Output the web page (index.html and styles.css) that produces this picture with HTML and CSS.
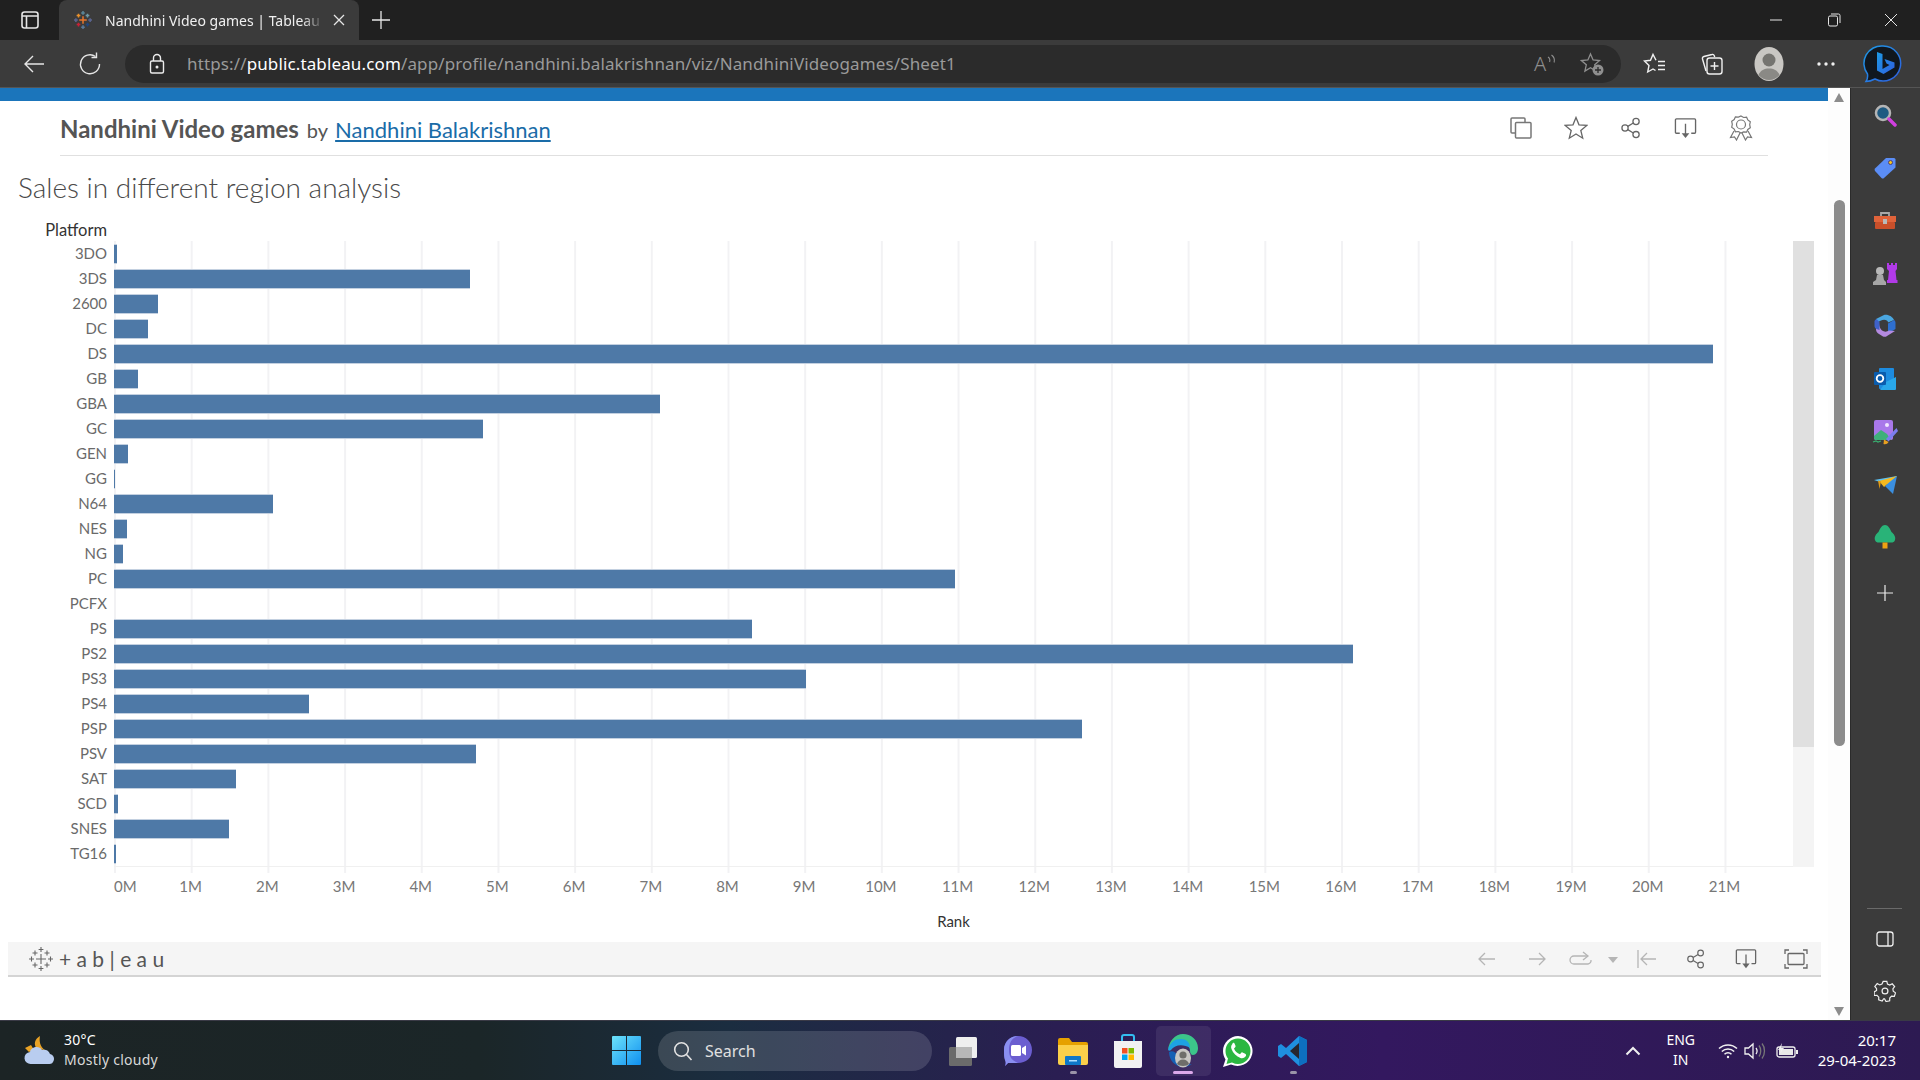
FILE: index.html
```html
<!DOCTYPE html>
<html lang="en">
<head>
    <meta charset="UTF-8">
    <title>Nandhini Video games | Tableau Public</title>
    <link rel="stylesheet" href="styles.css">
</head>
<body>
    <svg class="sprite" width="0" height="0">
        <symbol id="share" viewBox="0 0 24 24"><g fill="none" stroke="currentColor" stroke-width="1.4"><circle cx="5.5" cy="12" r="3.4"/><circle cx="17.5" cy="4.8" r="3.4"/><circle cx="17.5" cy="19.2" r="3.4"/><path d="M8.5 10.2l6-3.6M8.5 13.8l6 3.6"/></g></symbol>
        <symbol id="download" viewBox="0 0 24 24"><path d="M6 17H2.5a1 1 0 0 1-1-1V3a1 1 0 0 1 1-1h19a1 1 0 0 1 1 1v13a1 1 0 0 1-1 1H18M12 7v11" fill="none" stroke="currentColor" stroke-width="1.4"/><path d="M8 17h8l-4 5z" fill="currentColor"/></symbol>
        <symbol id="tabcross" viewBox="0 0 24 24"><g stroke="currentColor" stroke-width="1.1"><path d="M12 7v10M7 12h10"/><path d="M12 0v5M9.6 2.5h4.800M12 19v5M9.600 21.500h4.800M2.500 9.500v5M0 12h5M21.500 9.500v5M19 12h5M6 3.500v5M3.500 6h5M18 3.500v5M15.500 6h5M6 15.500v5M3.500 18h5M18 15.500v5M15.500 18h5"/></g></symbol>
    </svg>

    <div class="tabstrip">
        <div class="tab-toggle">
            <svg width="18" height="18" viewBox="0 0 18 18" fill="none" stroke="#e6e6e6" stroke-width="1.6"><rect x="1" y="1" width="16" height="16" rx="2.5"/><path d="M1 5h16M5.500 5v12"/></svg>
        </div>
        <div class="tab">
            <svg width="18" height="18" viewBox="0 0 24 24"><g stroke-width="2"><path d="M12 7v10M7 12h10" stroke="#e8762d"/><path d="M12 0v5M9.600 2.500h4.800" stroke="#5b879b"/><path d="M12 19v5M9.600 21.500h4.800" stroke="#59799b"/><path d="M2.500 9.500v5M0 12h5" stroke="#5b6591"/><path d="M21.500 9.500v5M19 12h5" stroke="#5b6591"/><path d="M6 3.500v5M3.500 6h5" stroke="#eb912b"/><path d="M18 3.500v5M15.500 6h5" stroke="#7099a6"/><path d="M6 15.500v5M3.500 18h5" stroke="#c72035"/><path d="M18 15.500v5M15.500 18h5" stroke="#1f447e"/></g></svg>
            <span class="tab-title">Nandhini Video games | Tableau</span>
            <svg class="tab-close" width="12" height="12" viewBox="0 0 12 12" stroke="#e6e6e6" stroke-width="1.300"><path d="M1 1l10 10M11 1L1 11"/></svg>
        </div>
        <div class="tab-new">
            <svg width="18" height="18" viewBox="0 0 18 18" stroke="#e6e6e6" stroke-width="1.300"><path d="M9 0v18M0 9h18"/></svg>
        </div>
        <div class="spacer"></div>
        <div class="win-btn"><svg width="14" height="14" viewBox="0 0 14 14" stroke="#e6e6e6"><path d="M1 7h12"/></svg></div>
        <div class="win-btn"><svg width="14" height="14" viewBox="0 0 14 14" fill="none" stroke="#e6e6e6"><rect x="1.500" y="3" width="9" height="10" rx="1.500"/><path d="M4 1h7.500a1.500 1.500 0 0 1 1.500 1.500V10"/></svg></div>
        <div class="win-btn"><svg width="14" height="14" viewBox="0 0 14 14" stroke="#e6e6e6"><path d="M1 1l12 12M13 1L1 13"/></svg></div>
    </div>

    <div class="toolbar">
        <div class="tool-btn">
            <svg width="24" height="24" viewBox="0 0 24 24" fill="none" stroke="#e6e6e6" stroke-width="1.400"><path d="M22 12H3M11 4l-8 8 8 8"/></svg>
        </div>
        <div class="tool-btn">
            <svg width="24" height="24" viewBox="0 0 24 24" fill="none" stroke="#e6e6e6" stroke-width="1.400"><path d="M17.500 4.500A9.500 9.500 0 1 0 21.500 12"/><path d="M18.500 0.500v5h-5"/></svg>
        </div>
        <div class="url-pill">
            <svg class="url-lock" width="24" height="24" viewBox="0 0 24 24" fill="none" stroke="#ececec" stroke-width="1.400"><rect x="5.500" y="9" width="13" height="12" rx="1.500"/><path d="M8.500 9V6a3.500 3.500 0 0 1 7 0v3"/><circle cx="12" cy="15" r="0.800" fill="#ececec"/></svg>
            <div class="url"><span class="url-dim">https://</span><span class="url-host">public.tableau.com</span><span class="url-dim">/app/profile/nandhini.balakrishnan/viz/NandhiniVideogames/Sheet1</span></div>
            <div class="read-aloud">
                <span class="read-a">A</span>
                <svg class="read-waves" width="10" height="12" viewBox="0 0 10 12" fill="none" stroke="#8f8f8f" stroke-width="1.100"><path d="M1 3c1.800 1.200 2.200 3 1.600 5M4.500 1c2.800 2 3.400 4.500 2.600 7.500"/></svg>
            </div>
            <svg class="url-icon" width="24" height="24" viewBox="0 0 24 24" fill="none" stroke="#8f8f8f" stroke-width="1.300"><path d="M10.500 2l2.600 6 6.400.6-4.800 4.200 1.400 6.300-5.600-3.300-5.600 3.300 1.400-6.300L1.500 8.600 7.900 8z"/><circle cx="18" cy="18" r="5.500" fill="#8f8f8f" stroke="none"/><path d="M18 15v6M15 18h6" stroke="#2b2b2b" stroke-width="1.300"/></svg>
        </div>
        <div class="end-btn">
            <svg width="24" height="24" viewBox="0 0 24 24" fill="none" stroke="#f0f0f0" stroke-width="1.400"><path d="M13 8.300L10 2.500 7.500 8.300 1.500 9 6 13.500 4.700 20 10 17l2.500 1.500"/><path d="M15 9.500h7M15 13.500h7M15 17.500h7"/></svg>
        </div>
        <div class="end-btn">
            <svg width="24" height="24" viewBox="0 0 24 24" fill="none" stroke="#f0f0f0" stroke-width="1.400"><path d="M6 19L2.500 7a2 2 0 0 1 1.400-2.500l8-2a2 2 0 0 1 2.400 1.200l.4 1.300"/><rect x="7" y="6" width="15" height="16" rx="2.500"/><path d="M14.500 10v8M10.500 14h8"/></svg>
        </div>
        <div class="end-btn">
            <svg width="30" height="34" viewBox="0 0 30 34"><ellipse cx="15" cy="17" rx="14.500" ry="17" fill="#c9c7c3"/><circle cx="15" cy="13" r="6.500" fill="#757470"/><path d="M4.500 28c2-5 6-6.500 10.500-6.500S23.500 23 25.500 28c-3 3.500-6.500 5-10.500 5s-7.500-1.500-10.500-5z" fill="#8a8985"/></svg>
        </div>
        <div class="end-btn">
            <svg width="18" height="4" viewBox="0 0 18 4" fill="#f0f0f0"><circle cx="2" cy="2" r="1.700"/><circle cx="9" cy="2" r="1.700"/><circle cx="16" cy="2" r="1.700"/></svg>
        </div>
        <div class="end-btn">
            <svg width="40" height="40" viewBox="0 0 40 40">
                <defs><linearGradient id="bingg" x1="0" y1="0" x2="1" y2="1"><stop offset="0" stop-color="#1d9be6"/><stop offset="1" stop-color="#2f5fe0"/></linearGradient></defs>
                <path d="M20 2a17.500 17.500 0 1 1-8 33c-3 1.500-6 2.500-9 2.500 1-1.500 2-4 1.500-7.500A17.500 17.500 0 0 1 20 2z" fill="#10171f" stroke="url(#bingg)" stroke-width="1.500"/>
                <path d="M14 8l5.500 2v15l7-4-3-1.500-2-4.500 10 3.500v5l-11 6.500-6.500-3.500z" fill="url(#bingg)"/>
            </svg>
        </div>
    </div>

    <div class="middle">
        <div class="page">
            <div class="topbar"></div>
            <div class="viz-header">
                <div class="viz-name"><strong>Nandhini Video games</strong><span class="viz-by">by</span><a class="viz-author" href="#">Nandhini Balakrishnan</a></div>
                <div class="viz-actions">
                    <div class="viz-action"><svg width="22" height="22" viewBox="0 0 22 22" fill="none" stroke="#777" stroke-width="1.500"><path d="M5 16H2a1 1 0 0 1-1-1V2a1 1 0 0 1 1-1h12a1 1 0 0 1 1 1v3"/><rect x="5.500" y="5.500" width="15.500" height="15.500" rx="1"/></svg></div>
                    <div class="viz-action"><svg width="24" height="24" viewBox="0 0 24 24" fill="none" stroke="#666" stroke-width="1.300"><path d="M12 1.500l3 7.300 7.800.6-6 5.100 1.900 7.700-6.700-4.200-6.700 4.200 1.900-7.700-6-5.100 7.800-.6z"/></svg></div>
                    <div class="viz-action"><svg class="ic-gray" width="22" height="22"><use href="#share"/></svg></div>
                    <div class="viz-action"><svg class="ic-gray" width="23" height="23"><use href="#download"/></svg></div>
                    <div class="viz-action"><svg width="24" height="26" viewBox="0 0 24 26" fill="none" stroke="#777" stroke-width="1.200"><path d="M12 1l2.600 1.500 3-.3 1.200 2.700 2.500 1.800-.6 3 .6 3-2.500 1.800-1.200 2.700-3-.3L12 18l-2.600-1.500-3 .3-1.200-2.700-2.500-1.800.6-3-.6-3 2.500-1.800 1.200-2.700 3 .3z"/><circle cx="12" cy="9.500" r="4.500"/><path d="M5 16l-3.500 6.500 4-.5 2 3L11 18M19 16l3.500 6.500-4-.5-2 3L13 18"/></svg></div>
                </div>
            </div>
            <div class="sheet-title">Sales in different region analysis</div>
            <div class="field-label">Platform</div>
            <div class="chart-body">
                <div class="labels">
                    <div class="label">3DO</div>
                    <div class="label">3DS</div>
                    <div class="label">2600</div>
                    <div class="label">DC</div>
                    <div class="label">DS</div>
                    <div class="label">GB</div>
                    <div class="label">GBA</div>
                    <div class="label">GC</div>
                    <div class="label">GEN</div>
                    <div class="label">GG</div>
                    <div class="label">N64</div>
                    <div class="label">NES</div>
                    <div class="label">NG</div>
                    <div class="label">PC</div>
                    <div class="label">PCFX</div>
                    <div class="label">PS</div>
                    <div class="label">PS2</div>
                    <div class="label">PS3</div>
                    <div class="label">PS4</div>
                    <div class="label">PSP</div>
                    <div class="label">PSV</div>
                    <div class="label">SAT</div>
                    <div class="label">SCD</div>
                    <div class="label">SNES</div>
                    <div class="label">TG16</div>
                </div>
                <div class="plot">
                    <div class="rows">
                        <div class="row"><div class="bar" style="width:3px"></div></div>
                        <div class="row"><div class="bar" style="width:356px"></div></div>
                        <div class="row"><div class="bar" style="width:44px"></div></div>
                        <div class="row"><div class="bar" style="width:34px"></div></div>
                        <div class="row"><div class="bar" style="width:1599px"></div></div>
                        <div class="row"><div class="bar" style="width:24px"></div></div>
                        <div class="row"><div class="bar" style="width:546px"></div></div>
                        <div class="row"><div class="bar" style="width:369px"></div></div>
                        <div class="row"><div class="bar" style="width:14px"></div></div>
                        <div class="row"><div class="bar" style="width:1px"></div></div>
                        <div class="row"><div class="bar" style="width:159px"></div></div>
                        <div class="row"><div class="bar" style="width:13px"></div></div>
                        <div class="row"><div class="bar" style="width:9px"></div></div>
                        <div class="row"><div class="bar" style="width:841px"></div></div>
                        <div class="row"><div class="bar" style="width:0"></div></div>
                        <div class="row"><div class="bar" style="width:638px"></div></div>
                        <div class="row"><div class="bar" style="width:1239px"></div></div>
                        <div class="row"><div class="bar" style="width:692px"></div></div>
                        <div class="row"><div class="bar" style="width:195px"></div></div>
                        <div class="row"><div class="bar" style="width:968px"></div></div>
                        <div class="row"><div class="bar" style="width:362px"></div></div>
                        <div class="row"><div class="bar" style="width:122px"></div></div>
                        <div class="row"><div class="bar" style="width:4px"></div></div>
                        <div class="row"><div class="bar" style="width:115px"></div></div>
                        <div class="row"><div class="bar" style="width:2px"></div></div>
                    </div>
                </div>
                <div class="chart-scroll"><div class="chart-thumb"></div></div>
            </div>
            <div class="axis">
                <div class="tick tick-first">0M</div>
                <div class="tick">1M</div>
                <div class="tick">2M</div>
                <div class="tick">3M</div>
                <div class="tick">4M</div>
                <div class="tick">5M</div>
                <div class="tick">6M</div>
                <div class="tick">7M</div>
                <div class="tick">8M</div>
                <div class="tick">9M</div>
                <div class="tick">10M</div>
                <div class="tick">11M</div>
                <div class="tick">12M</div>
                <div class="tick">13M</div>
                <div class="tick">14M</div>
                <div class="tick">15M</div>
                <div class="tick">16M</div>
                <div class="tick">17M</div>
                <div class="tick">18M</div>
                <div class="tick">19M</div>
                <div class="tick">20M</div>
                <div class="tick">21M</div>
            </div>
            <div class="axis-title">Rank</div>
            <div class="viz-footer">
                <svg class="footer-logo" width="24" height="24"><use href="#tabcross"/></svg>
                <span class="footer-word">+ a b | e a u</span>
                <div class="spacer"></div>
                <div class="foot-btn foot-off"><svg width="18" height="14" viewBox="0 0 18 14" fill="none" stroke="currentColor" stroke-width="1.300"><path d="M17 7H1M7 1L1 7l6 6"/></svg></div>
                <div class="foot-btn foot-off"><svg width="18" height="14" viewBox="0 0 18 14" fill="none" stroke="currentColor" stroke-width="1.300"><path d="M1 7h16M11 1l6 6-6 6"/></svg></div>
                <div class="foot-btn foot-off foot-redo"><svg width="24" height="16" viewBox="0 0 24 16" fill="none" stroke="currentColor" stroke-width="1.300"><path d="M19 5H5a3.500 3.500 0 0 0 0 8h14a3.500 3.500 0 0 0 3-4"/><path d="M14 1l5 4-5 4"/></svg></div>
                <div class="foot-caret"></div>
                <div class="foot-btn foot-off foot-first"><svg width="20" height="18" viewBox="0 0 20 18" fill="none" stroke="currentColor" stroke-width="1.300"><path d="M1 0v18M19 9H4M10 3L4 9l6 6"/></svg></div>
                <div class="foot-btn"><svg class="ic-gray" width="20" height="20"><use href="#share"/></svg></div>
                <div class="foot-btn"><svg class="ic-gray" width="22" height="22"><use href="#download"/></svg></div>
                <div class="foot-btn"><svg width="24" height="20" viewBox="0 0 24 20" fill="none" stroke="#666" stroke-width="1.300"><path d="M1 5V1h4M19 1h4v4M23 15v4h-4M5 19H1v-4"/><rect x="4" y="4.500" width="16" height="11" rx="1"/></svg></div>
            </div>
        </div>
        <div class="page-scroll">
            <div class="arrow-up"></div>
            <div class="page-thumb"></div>
            <div class="arrow-down"></div>
        </div>
        <div class="sidebar">
            <div class="side-btn"><svg width="24" height="24" viewBox="0 0 24 24"><circle cx="10" cy="10" r="7" fill="#1e5a82" stroke="#b5b5b5" stroke-width="2.500"/><path d="M16 16l6 6" stroke="#d13fe0" stroke-width="3.500" stroke-linecap="round"/></svg></div>
            <div class="side-btn"><svg width="24" height="24" viewBox="0 0 24 24"><path d="M13 2h8a1.500 1.500 0 0 1 1.500 1.500v8L11 22a2 2 0 0 1-2.500 0L2 15a2 2 0 0 1 0-2.500z" fill="#5b8df5"/><circle cx="17.500" cy="6.500" r="2" fill="#f5c518" stroke="#4a3f80"/></svg></div>
            <div class="side-btn"><svg width="24" height="24" viewBox="0 0 24 24"><path d="M8 7V4h8v3" fill="none" stroke="#a8a8a8" stroke-width="1.800"/><rect x="1" y="7" width="22" height="6" fill="#e0633a"/><rect x="2" y="13" width="20" height="7" rx="1" fill="#c94f2a"/><rect x="10" y="10" width="4" height="5" fill="#b9b9b9"/></svg></div>
            <div class="side-btn"><svg width="26" height="26" viewBox="0 0 26 26"><path d="M15 3h2v2h2V3h2v2h2V3h2v6l-1.500 2 1 9h1v3H15v-3h1l1-9-2-2z" fill="#b13ae8"/><circle cx="8" cy="11" r="4" fill="#b8b8b8"/><path d="M5 15h6l1 5 2 2v3H1v-3l3-2z" fill="#a6a6a6"/></svg></div>
            <div class="side-btn"><svg width="24" height="24" viewBox="0 0 24 24"><path d="M11 1L3 5v4l5-2.500c3-1.500 7-.5 7 2L21 6c-1-3-6-6-10-5z" fill="#4aa6e0"/><path d="M21 6c1.500 1 1.500 2 1.500 4v5l-6 3.500c-1 .5-1.500-.5-1.500-1.500V9.500z" fill="#2e6fd0"/><path d="M3 9v6c0 3 1.500 4 3 5l4 2.500c1 .5 3 .5 4-.5l8-5-6-.5c-2 1.500-5 1.500-7 0S6 12 6 9z" fill="#b48ae0"/><path d="M1.500 7.500c0-1 1-2 2-2.500l3 3v8l-3-1c-1-.5-2-1.500-2-3z" fill="#3f62c8"/></svg></div>
            <div class="side-btn"><svg width="24" height="24" viewBox="0 0 24 24"><rect x="6" y="1" width="15" height="21" rx="1" fill="#1d8ce0"/><path d="M23 10v12a1 1 0 0 1-1 1H7l6-8z" fill="#29a8ea"/><rect x="1" y="5" width="12" height="13" rx="1" fill="#0a5cad"/><circle cx="7" cy="11.500" r="3.300" fill="none" stroke="#fff" stroke-width="1.800"/></svg></div>
            <div class="side-btn"><svg width="26" height="26" viewBox="0 0 26 26"><rect x="2" y="1" width="19" height="20" rx="2" fill="#a978ea"/><path d="M2 17l7-6 6 4 4 6H4a2 2 0 0 1-2-2z" fill="#3fb07a"/><circle cx="15" cy="6" r="2" fill="#f1e6ff"/><path d="M24.500 9L14 20l2.500 2.500L26 12z" fill="#7b7ef0"/><path d="M12 20.500l4.500 2.500c-1 2-3 2.500-5 2z" fill="#e8a020"/><path d="M1 23l3-1 2 1 3-1" fill="none" stroke="#38b070" stroke-width="1.300"/></svg></div>
            <div class="side-btn"><svg width="24" height="20" viewBox="0 0 24 20"><path d="M1 5l23-4-8 9z" fill="#5bc2f5"/><path d="M6 6l18-5L11 12z" fill="#f5b921"/><path d="M12 11L24 1 20 19z" fill="#3b8fe0"/><path d="M5 5.500l3 1L6.500 14z" fill="#e09a15"/></svg></div>
            <div class="side-btn side-tree"><svg width="24" height="26" viewBox="0 0 24 26"><path d="M12 1c3 0 5 3.500 6.500 7 2.500 2 4.500 5 3.500 8-.5 2-2 2.500-4 2.500H6c-2 0-3.500-.5-4-2.500-1-3 1-6 3.500-8C7 4.500 9 1 12 1z" fill="#29b378"/><rect x="9.500" y="18.500" width="5" height="6" fill="#eda213"/></svg></div>
            <div class="side-btn"><svg width="16" height="16" viewBox="0 0 16 16" stroke="#ececec" stroke-width="1.200"><path d="M8 0v16M0 8h16"/></svg></div>
            <div class="spacer"></div>
            <div class="side-sep"></div>
            <div class="side-tool"><svg width="18" height="16" viewBox="0 0 18 16" fill="none" stroke="#f0f0f0" stroke-width="1.300"><rect x="1" y="1" width="16" height="14" rx="2.500"/><path d="M12 1v14"/></svg></div>
            <div class="side-tool"><svg width="22" height="22" viewBox="0 0 24 24" fill="none" stroke="#f0f0f0" stroke-width="1.300"><circle cx="12" cy="12" r="3.200"/><path d="M10 1.500h4l.7 3 2.500 1.100 2.700-1.500 2.600 3.100-1.900 2.400.4 2.700 2.500 1.700-1.300 3.800-3.100-.2-1.900 2-.100 3.100-4 .8L11.500 20.500h-1l-1.600 2.500-3.800-1.300.1-3-2-2-3 .2L.2 13l2.600-1.600v-2L.9 7l2.600-3.100 2.700 1.500 2.500-1.100z"/></svg></div>
        </div>
    </div>

    <div class="taskbar">
        <div class="weather">
            <svg width="32" height="32" viewBox="0 0 32 32"><path d="M16 1c-5 3-7 8-3 13l8 1c-5-3-6-9-5-14z" fill="#e9a326"/><path d="M1 13l6-3 3 5-5 2z" fill="#e9a326"/><path d="M7 29a6 6 0 0 1-1-12c1-5 9-7 12-2 3-1 7 0 8 4 4 1 5 5 3 8-1 2-3 2-5 2z" fill="#b9cdf0"/></svg>
            <div class="weather-text">
                <div class="weather-temp">30°C</div>
                <div class="weather-desc">Mostly cloudy</div>
            </div>
        </div>
        <svg class="start" width="29" height="29" viewBox="0 0 29 29"><defs><linearGradient id="wing" x1="0" y1="0" x2="1" y2="1"><stop offset="0" stop-color="#6de3fb"/><stop offset="1" stop-color="#0f8fef"/></linearGradient></defs><path d="M1 0h13v14H0V1a1 1 0 0 1 1-1zM15 0h13a1 1 0 0 1 1 1v13H15zM0 15h14v14H1a1 1 0 0 1-1-1zM15 15h14v13a1 1 0 0 1-1 1H15z" fill="url(#wing)"/></svg>
        <div class="search">
            <svg width="20" height="20" viewBox="0 0 20 20" fill="none" stroke="#e2e2e2" stroke-width="1.600"><circle cx="8.500" cy="8.500" r="6.800"/><path d="M13.500 13.500l5 5.500"/></svg>
            <span>Search</span>
        </div>
        <div class="apps">
            <div class="app"><svg width="30" height="30" viewBox="0 0 30 30"><rect x="1" y="11" width="23" height="19" rx="1.500" fill="#6b6b6b"/><rect x="8" y="1" width="21" height="21" rx="1.500" fill="#efefef"/><rect x="8" y="11" width="16" height="11" fill="#b8b8b8"/></svg></div>
            <div class="app"><svg width="30" height="32" viewBox="0 0 30 32"><path d="M15 1c8 0 14 6 14 14s-6 13-14 13H5l-3 3c1-2 1-4 0-6-1-3-1-6-1-10C1 7 7 1 15 1z" fill="#6b5ed0"/><path d="M1 15C1 7 7 1 15 1c-7 2-9 8-9 14 0 6 2 10 9 13H5l-3 3c1-2 1-4 0-6-1-3-1-6-1-10z" fill="#8a8ff0"/><rect x="8" y="10" width="10" height="11" rx="1.500" fill="#fff"/><path d="M19 13l4-2.500v10L19 18z" fill="#fff"/></svg></div>
            <div class="app"><svg width="30" height="28" viewBox="0 0 30 28"><path d="M0 3a2 2 0 0 1 2-2h9l3 4h14a2 2 0 0 1 2 2v4H0z" fill="#e6a100"/><path d="M0 8h30v18a2 2 0 0 1-2 2H2a2 2 0 0 1-2-2z" fill="#fbd04a"/><rect x="7" y="19" width="16" height="9" rx="1" fill="#0f78c8"/><rect x="11" y="23" width="8" height="1.500" fill="#aee0ff"/></svg></div>
            <div class="app"><svg width="30" height="34" viewBox="0 0 30 34"><path d="M9 7V3a2 2 0 0 1 2-2h8a2 2 0 0 1 2 2v4" fill="none" stroke="#33bdf0" stroke-width="2"/><path d="M1 7h28v25a2 2 0 0 1-2 2H3a2 2 0 0 1-2-2z" fill="#f2f2f2"/><rect x="9" y="14" width="5.500" height="5.500" fill="#f25022"/><rect x="15.500" y="14" width="5.500" height="5.500" fill="#7fba00"/><rect x="9" y="20.500" width="5.500" height="5.500" fill="#00a4ef"/><rect x="15.500" y="20.500" width="5.500" height="5.500" fill="#ffb900"/></svg></div>
            <div class="app app-active">
                <svg width="30" height="34" viewBox="0 0 30 34"><path d="M15 0c8 0 15 6 15 14 0 4-2 7-5 7-2 0-3-2-3-4 0-5-4-8-9-8C7 9 2 12 0 16 1 7 7 0 15 0z" fill="#3cc58a"/><path d="M0 16C2 8 7 5 13 5c5 0 9 3 9 9-6-4-15-4-19 2-1 1-2 1-3 0z" fill="#1da2e3"/><path d="M1 18c0 8 6 15 14 15 3 0 6-1 9-3-5 1-12-2-14-8-2-4-6-6-9-4z" fill="#1560b5"/><ellipse cx="15" cy="24" rx="8" ry="9.500" fill="#c9c7c3"/><circle cx="15" cy="21" r="3.600" fill="#6f6e6a"/><path d="M9 30c1-3 3-4.500 6-4.500s5 1.500 6 4.500c-2 2.500-10 2.500-12 0z" fill="#6f6e6a"/></svg>
                <div class="run-active"></div>
            </div>
            <div class="app"><svg width="32" height="34" viewBox="0 0 32 34"><path d="M16 2C8 2 1 9 1 17c0 3 1 6 2.500 8.500L1 33l8-2.500A15 15 0 1 0 16 2z" fill="#fff"/><path d="M16 4.500C9 4.500 3.500 10 3.500 17c0 3 1 5.500 2.500 7.500L4.500 30l5.500-1.500c2 1 4 1.500 6 1.500 7 0 12.500-6 12.500-13S23 4.500 16 4.500z" fill="#2bb741"/><path d="M11 9.500c-1.500 1-2.500 3-1.500 5.500 1.500 4 5 7.500 9 9 2.500.8 4.500-.5 5.500-2.200.3-1 0-1.500-.8-2l-2.700-1.300c-.6-.3-1.100-.1-1.500.4l-1 1.300c-3-1-5-3-6-5.800l1.200-1.100c.4-.4.5-.9.300-1.500l-1.100-2.500c-.5-.7-1.500-.6-2.400.2z" fill="#fff"/></svg></div>
            <div class="app"><svg width="30" height="30" viewBox="0 0 30 30"><path d="M21 0l8 4v22l-8 4-13-12-5 4-3-2v-10l3-2 5 4z" fill="#1f8fe0"/><path d="M21 7l-9 8 9 8z" fill="#26262e"/><path d="M21 0l8 4v22l-8 4z" fill="#0d6fc0"/></svg></div>
            <div class="run-dot run-folder"></div>
            <div class="run-dot run-code"></div>
        </div>
        <div class="tray">
            <svg class="tray-chevron" width="16" height="10" viewBox="0 0 16 10" fill="none" stroke="#f0f0f0" stroke-width="2"><path d="M1.500 8.500L8 2l6.500 6.500"/></svg>
            <div class="tray-lang">ENG<br>IN</div>
            <svg class="tray-wifi" width="20" height="16" viewBox="0 0 20 16" fill="none" stroke="#f0f0f0" stroke-width="1.500"><path d="M1 5.500a13 13 0 0 1 18 0M3.800 8.500a9 9 0 0 1 12.400 0M6.500 11.300a5 5 0 0 1 7 0"/><circle cx="10" cy="14" r="1.200" fill="#f0f0f0" stroke="none"/></svg>
            <svg class="tray-sound" width="22" height="18" viewBox="0 0 22 18" fill="none" stroke="#f0f0f0" stroke-width="1.300"><path d="M1 6h3.500L9 2v14l-4.500-4H1z"/><path d="M12 6c1.300 1.800 1.300 4.200 0 6"/><path d="M15 3.500c2.300 3 2.300 8 0 11M18 1.500c3.300 4 3.300 11 0 15" stroke="#777"/></svg>
            <svg class="tray-battery" width="24" height="16" viewBox="0 0 24 16"><rect x="2" y="4" width="18" height="10" rx="2" fill="none" stroke="#f0f0f0" stroke-width="1.300"/><rect x="4" y="6" width="14" height="6" fill="#e8e8e8"/><rect x="21" y="7" width="2" height="4" fill="#f0f0f0"/><path d="M7 0L3 7h3l-1 4 4-6H6z" fill="#f0f0f0"/></svg>
            <div class="tray-clock">20:17<br>29-04-2023</div>
        </div>
    </div>
</body>
</html>
```

FILE: styles.css
```css
* {
    box-sizing: border-box;
}
html, body {
    margin: 0;
    height: 100%;
}
body {
    width: 1920px;
    height: 1080px;
    overflow: hidden;
    display: flex;
    flex-direction: column;
    font-family: "Noto Sans", sans-serif;
    background-color: #fff;
}
.sprite {
    position: absolute;
}
.spacer {
    flex: 1;
}

/* browser chrome */
.tabstrip {
    height: 40px;
    display: flex;
    background-color: #202020;
    color: #f0f0f0;
}
.tab-toggle {
    width: 59px;
    display: flex;
    align-items: center;
    justify-content: center;
}
.tab {
    width: 300px;
    display: flex;
    align-items: center;
    padding: 0 14px 0 15px;
    background-color: #3b3b3b;
    border-radius: 8px 8px 0 0;
}
.tab-title {
    flex: 1;
    margin-left: 13px;
    font-size: 14px;
    white-space: nowrap;
    -webkit-mask-image: linear-gradient(to right, #000 90%, transparent 100%);
}
.tab-close {
    margin-left: 9px;
}
.tab-new {
    width: 44px;
    display: flex;
    align-items: center;
    justify-content: center;
}
.win-btn {
    width: 57.5px;
    display: flex;
    align-items: center;
    justify-content: center;
}
.toolbar {
    height: 48px;
    padding: 0 7px 0 12px;
    display: flex;
    align-items: center;
    background-color: #3b3b3b;
    border-bottom: 1px solid #555;
}
.tool-btn {
    width: 44px;
    margin-right: 12px;
    display: flex;
    justify-content: center;
}
.url-pill {
    width: 1496px;
    height: 38px;
    margin-left: 1px;
    margin-right: 5px;
    padding: 0 17px 0 20px;
    display: flex;
    align-items: center;
    gap: 22px;
    background-color: #2b2b2b;
    border-radius: 19px;
}
.url-lock {
    margin-right: -4px;
}
.url {
    flex: 1;
    font-size: 17px;
    letter-spacing: 0.13px;
    white-space: nowrap;
}
.url-dim {
    color: #9a9a9a;
}
.url-host {
    color: #fff;
}
.read-aloud {
    width: 24px;
    height: 24px;
    display: flex;
    align-items: flex-start;
}
.read-a {
    font-size: 20px;
    font-weight: 300;
    line-height: 24px;
    color: #8f8f8f;
}
.read-waves {
    margin-left: 1px;
    margin-top: 2px;
}
.end-btn {
    width: 57px;
    display: flex;
    justify-content: center;
    align-items: center;
}

/* page */
.middle {
    flex: 1;
    display: flex;
    min-height: 0;
}
.page {
    width: 1828px;
    display: flex;
    flex-direction: column;
    font-family: "Lato", sans-serif;
}
.topbar {
    height: 13px;
    background-color: #1b75bb;
}
.viz-header {
    height: 55px;
    margin: 0 60px;
    display: flex;
    align-items: center;
    justify-content: space-between;
    border-bottom: 1px solid #e0e0e0;
}
.viz-name {
    color: #555;
    font-size: 22px;
}
.viz-name strong {
    font-size: 24px;
}
.viz-by {
    margin-left: 8px;
    font-size: 20px;
}
.viz-author {
    margin-left: 7px;
    color: #1a6ca8;
    text-decoration: underline;
}
.viz-actions {
    display: flex;
}
.viz-action {
    width: 55px;
    display: flex;
    justify-content: center;
    align-items: center;
}
.ic-gray {
    color: #666;
}
.sheet-title {
    height: 61px;
    padding-left: 18px;
    line-height: 62px;
    font-size: 28px;
    font-weight: 300;
    color: #4a4a4a;
}
.field-label {
    height: 24px;
    width: 107px;
    text-align: right;
    font-size: 16.5px;
    line-height: 26px;
    color: #333;
}

/* chart */
.chart-body {
    display: flex;
    align-items: flex-start;
}
.labels {
    width: 107px;
    margin-right: 7px;
}
.label {
    height: 25px;
    text-align: right;
    font-size: 15px;
    line-height: 25px;
    color: #6a6a6a;
}
.plot {
    width: 1679px;
    padding-bottom: 6px;
    background-image: linear-gradient(to right, #f2f2f4 2px, transparent 2px);
    background-size: 76.7px 100%;
}
.rows {
    height: 626px;
    border-bottom: 1px solid #f0f0f0;
}
.row {
    height: 25px;
    padding-top: 4px;
}
.bar {
    height: 18px;
    background-color: #4e79a7;
    box-shadow: 0 1px #c3d0e0, 0 -1px #c3d0e0;
}
.chart-scroll {
    width: 21px;
    height: 626px;
    background-color: #f4f4f4;
}
.chart-thumb {
    height: 506px;
    background-color: #e0e0e0;
}
.axis {
    height: 27px;
    padding-left: 114px;
    display: flex;
    font-size: 15px;
    line-height: 27px;
    color: #777;
}
.tick {
    width: 76.7px;
    text-align: center;
}
.tick-first {
    width: 38.35px;
    text-align: left;
}
.axis-title {
    width: 1793px;
    height: 22px;
    margin-top: 10px;
    padding-left: 114px;
    text-align: center;
    font-size: 15px;
    line-height: 22px;
    color: #333;
}
.viz-footer {
    height: 35px;
    margin: 10px 7px 0 8px;
    padding-left: 21px;
    display: flex;
    align-items: center;
    background-color: #f5f5f5;
    border-bottom: 2px solid #d4d4d4;
}
.footer-logo {
    color: #666;
}
.footer-word {
    margin-left: 6px;
    font-size: 21px;
    color: #555;
    white-space: nowrap;
}
.foot-btn {
    width: 50px;
    display: flex;
    justify-content: center;
    align-items: center;
}
.foot-off {
    color: #b5b5b5;
}
.foot-redo {
    width: 38px;
}
.foot-caret {
    width: 0;
    height: 0;
    margin: 2px 5px 0 8px;
    border-left: 5px solid transparent;
    border-right: 5px solid transparent;
    border-top: 6px solid #b5b5b5;
}
.foot-first {
    width: 48px;
}

.page-scroll {
    width: 22px;
    padding: 5px 0 4px;
    display: flex;
    flex-direction: column;
    align-items: center;
    background-color: #fdfdfd;
}
.arrow-up {
    width: 0;
    height: 0;
    border-left: 5.500px solid transparent;
    border-right: 5.500px solid transparent;
    border-bottom: 9px solid #8c8c8c;
}
.arrow-down {
    width: 0;
    height: 0;
    margin-top: auto;
    border-left: 5.500px solid transparent;
    border-right: 5.500px solid transparent;
    border-top: 9px solid #8c8c8c;
}
.page-thumb {
    width: 11px;
    height: 546px;
    margin-top: 98px;
    background-color: #8c8c8c;
    border-radius: 6px;
}

/* edge sidebar */
.sidebar {
    flex: 1;
    padding: 15px 2px 17px 0;
    display: flex;
    flex-direction: column;
    align-items: center;
    background-color: #3b3b3b;
    border-left: 1px solid #2b2b2b;
}
.side-btn {
    height: 24px;
    margin-bottom: 28.8px;
    display: flex;
    align-items: center;
    justify-content: center;
}
.side-tree {
    margin-bottom: 32px;
}
.side-sep {
    width: 35px;
    height: 1px;
    margin-bottom: 18px;
    background-color: #6a6a6a;
}
.side-tool {
    height: 24px;
    margin-bottom: 28px;
    display: flex;
    align-items: center;
    justify-content: center;
}
.side-tool:last-child {
    margin-bottom: 0;
}

/* taskbar */
.taskbar {
    height: 60px;
    display: flex;
    align-items: center;
    background: linear-gradient(90deg, #1c2425 0%, #1b2628 25%, #1b2d40 38%, #2a1e52 55%, #33185f 72%, #2d1a52 100%);
    border-top: 1px solid #3a3a46;
    color: #fff;
    font-size: 14px;
}
.weather {
    width: 612px;
    padding-left: 24px;
    display: flex;
    align-items: center;
    gap: 8px;
}
.weather-text {
    margin-top: -2px;
    line-height: 20px;
    letter-spacing: 0.27px;
}
.weather-desc {
    color: #d8d8d8;
}
.search {
    width: 274px;
    height: 40px;
    margin-left: 17px;
    padding-left: 15px;
    display: flex;
    align-items: center;
    gap: 12px;
    background-color: rgba(255, 255, 255, 0.14);
    border-radius: 20px;
    font-size: 16px;
    color: #e0e0e0;
}
.apps {
    position: relative;
    margin-left: 3.5px;
    display: flex;
    align-items: center;
}
.app {
    width: 55px;
    height: 50px;
    display: flex;
    align-items: center;
    justify-content: center;
}
.app-active {
    position: relative;
    background-color: rgba(255, 255, 255, 0.08);
    border-radius: 5px;
}
.run-active {
    position: absolute;
    left: 17px;
    bottom: 2px;
    width: 20px;
    height: 3px;
    border-radius: 2px;
    background-color: #dba8ea;
}
.run-dot {
    position: absolute;
    bottom: 2px;
    width: 7px;
    height: 3px;
    border-radius: 2px;
    background-color: #9a94a8;
}
.run-folder {
    left: 134px;
}
.run-code {
    left: 354px;
}
.tray {
    margin-left: auto;
    padding-right: 24px;
    display: flex;
    align-items: center;
}
.tray-chevron {
    margin-right: 20px;
}
.tray-lang {
    width: 40px;
    margin-right: 17px;
    margin-top: -2px;
    text-align: center;
    line-height: 20px;
}
.tray-wifi {
    margin-right: 6px;
}
.tray-sound {
    margin-right: 9px;
}
.tray-battery {
    margin-right: 19px;
}
.tray-clock {
    margin-top: -2px;
    text-align: right;
    font-size: 15px;
    line-height: 20px;
}
```
